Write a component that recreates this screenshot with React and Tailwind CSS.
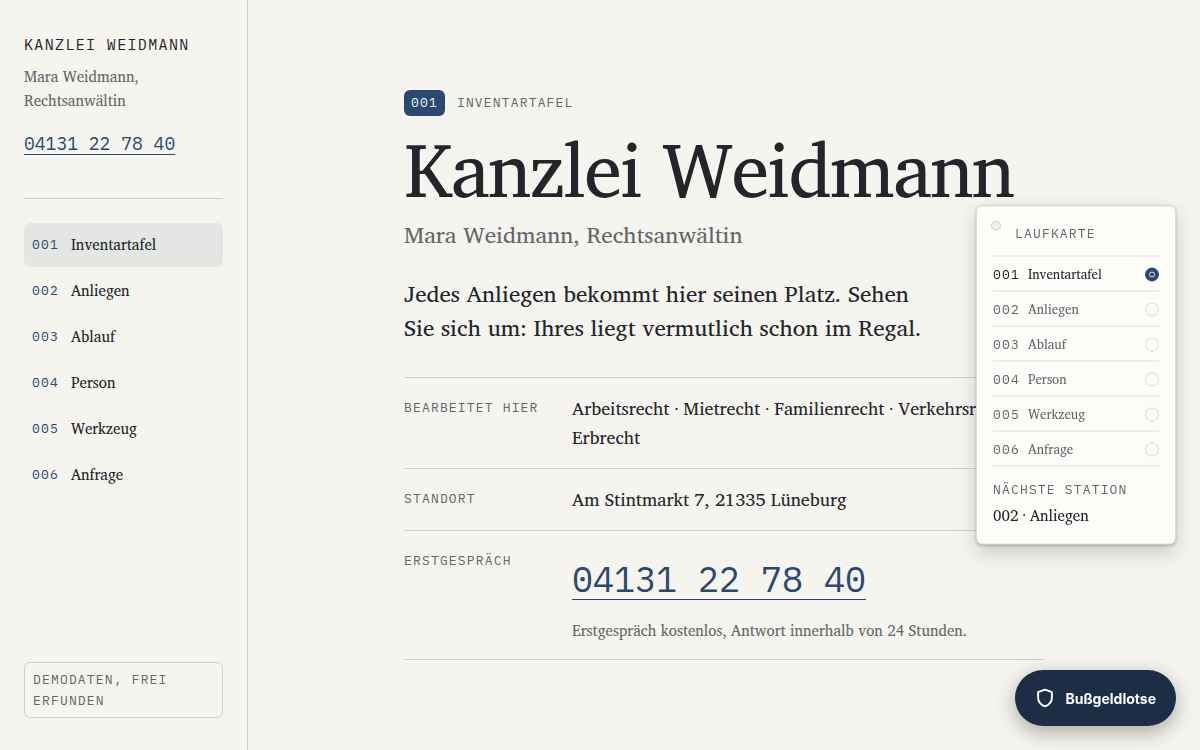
const stations = [
  { id: "001", label: "Inventartafel" },
  { id: "002", label: "Anliegen" },
  { id: "003", label: "Ablauf" },
  { id: "004", label: "Person" },
  { id: "005", label: "Werkzeug" },
  { id: "006", label: "Anfrage" }
];

const current = "001";

const mono = "font-['IBM_Plex_Mono','Liberation_Mono',monospace]";
const caps = "font-['IBM_Plex_Mono','Liberation_Mono',monospace] text-[13px] tracking-[0.09em] uppercase";

function ShieldIcon() {
  return (
    <svg width="20" height="20" viewBox="0 0 20 20" fill="none" stroke="currentColor" strokeWidth="1.9" strokeLinejoin="round" aria-hidden="true">
      <path d="M10 1.6 16.9 4.2v5.2c0 4.1-2.5 7.2-6.9 9-4.4-1.8-6.9-4.9-6.9-9V4.2L10 1.6Z" />
    </svg>
  );
}

function Sidebar() {
  return (
    <aside className="sticky top-0 flex h-screen w-62 shrink-0 flex-col border-r border-[#cfd0cc] px-6 pt-[33px] pb-8">
      <p className={`${mono} text-[15px] leading-6 tracking-[0.09em] uppercase`}>Kanzlei Weidmann</p>
      <p className="mt-2 max-w-36 text-[15px] leading-6 text-[#63666a]">Mara Weidmann, Rechtsanwältin</p>
      <a href="tel:+494131227840" className={`${mono} mt-5 self-start border-b border-[#2a4870] text-[18px] leading-[21px] text-[#2a4870]`}>
        04131 22 78 40
      </a>
      <nav aria-label="Stationen" className="mt-[43px] flex flex-col gap-0.5 border-t border-[#cfd0cc] pt-6">
        {stations.map((item) => (
          <a
            key={item.id}
            href={`#${item.id}`}
            aria-current={item.id === current ? "page" : undefined}
            className={`flex h-11 items-center gap-3 rounded-md px-2 ${item.id === current ? "bg-[#e3e6e3]" : ""}`}
          >
            <span className={`${caps} text-[#2a4870]`}>{item.id}</span>
            <span className="text-[15px]">{item.label}</span>
          </a>
        ))}
      </nav>
      <p className={`${caps} mt-auto rounded-md border border-[#cfd0cc] px-2 py-1.5 leading-[21px] text-[#63666a]`}>
        Demodaten, frei erfunden
      </p>
    </aside>
  );
}

function FactRow({ label, children }) {
  return (
    <div className="flex border-b border-[#cfd0cc] py-4">
      <dt className={`${caps} w-42 shrink-0 pt-1 leading-5 text-[#63666a]`}>{label}</dt>
      <dd className="min-w-0 flex-1 text-[18px] leading-[29px]">{children}</dd>
    </div>
  );
}

function RouteCard() {
  return (
    <aside
      aria-label="Laufkarte"
      className="fixed top-1/2 right-6 w-50 -translate-y-1/2 rounded-md border border-[#dddcd6] bg-[#fdfcf9] p-4 shadow-[0_1px_3px_rgba(30,35,40,0.25),0_8px_20px_rgba(30,35,40,0.18)]"
    >
      <span className="absolute top-3.5 left-3.5 size-2.5 rounded-full border border-[#cfd0cc] bg-[#f0efeb]" />
      <h2 className={`${caps} border-b border-[#dcdcd8] pb-3 pl-[22px] leading-[21px] text-[#63666a]`}>Laufkarte</h2>
      <ol>
        {stations.map((item) => {
          const active = item.id === current;
          return (
            <li key={item.id} className={`flex h-[35px] items-center gap-2 border-b border-[#dcdcd8] pt-px ${active ? "" : "text-[#63666a]"}`}>
              <span className={caps}>{item.id}</span>
              <span className="text-[13px]">{item.label}</span>
              <span
                className={`ml-auto flex size-3.5 items-center justify-center rounded-full border ${
                  active ? "border-[#2a4870] bg-[#2a4870]" : "border-[#d8d8d4]"
                }`}
              >
                {active && <span className="size-1.5 rounded-full border border-[#d5e2f2]" />}
              </span>
            </li>
          );
        })}
      </ol>
      <p className={`${caps} mt-3 leading-[21px] text-[#63666a]`}>Nächste Station</p>
      <p className="mt-1 text-[15px] leading-6">002 · Anliegen</p>
    </aside>
  );
}

export default function App() {
  return (
    <div className="flex min-h-screen bg-[#f5f4ef] font-['Charter','Charis_SIL','Liberation_Serif',serif] text-[#22262b]">
      <Sidebar />
      <main className="min-w-0 flex-1 pt-[90px] pb-16">
        <div className="mx-auto max-w-[640px]">
          <div className="flex items-center gap-3">
            <span className={`${caps} rounded-md bg-[#2a4870] px-[7px] leading-[26px] text-[#f5f4ef]`}>001</span>
            <span className={`${caps} text-[#63666a]`}>Inventartafel</span>
          </div>
          <h1 className="mt-3 text-[76px] leading-20 tracking-[-0.02em]">Kanzlei Weidmann</h1>
          <p className="mt-2 text-[23px] leading-9 text-[#63666a]">Mara Weidmann, Rechtsanwältin</p>
          <p className="mt-6 max-w-[530px] text-[23px] leading-[34px]">
            Jedes Anliegen bekommt hier seinen Platz. Sehen Sie sich um: Ihres liegt vermutlich schon im Regal.
          </p>
          <dl className="mt-[33px] border-t border-[#cfd0cc]">
            <FactRow label="Bearbeitet hier">Arbeitsrecht · Mietrecht · Familienrecht · Verkehrsrecht · Erbrecht</FactRow>
            <FactRow label="Standort">Am Stintmarkt 7, 21335 Lüneburg</FactRow>
            <FactRow label="Erstgespräch">
              <a href="tel:+494131227840" className={`${mono} mt-3 inline-block border-b border-[#2a4870] text-[35px] leading-10 text-[#2a4870]`}>
                04131 22 78 40
              </a>
              <p className="mt-[19px] text-[15px] leading-6 text-[#63666a]">Erstgespräch kostenlos, Antwort innerhalb von 24 Stunden.</p>
            </FactRow>
          </dl>
        </div>
      </main>
      <RouteCard />
      <button
        type="button"
        className="fixed right-6 bottom-6 flex h-14 items-center gap-2.5 rounded-full bg-[#1c2d45] px-5 font-['Inter',sans-serif] text-[14px] font-bold text-white shadow-[0_6px_20px_rgba(30,25,20,0.35)]"
      >
        <ShieldIcon />
        Bußgeldlotse
      </button>
    </div>
  );
}
